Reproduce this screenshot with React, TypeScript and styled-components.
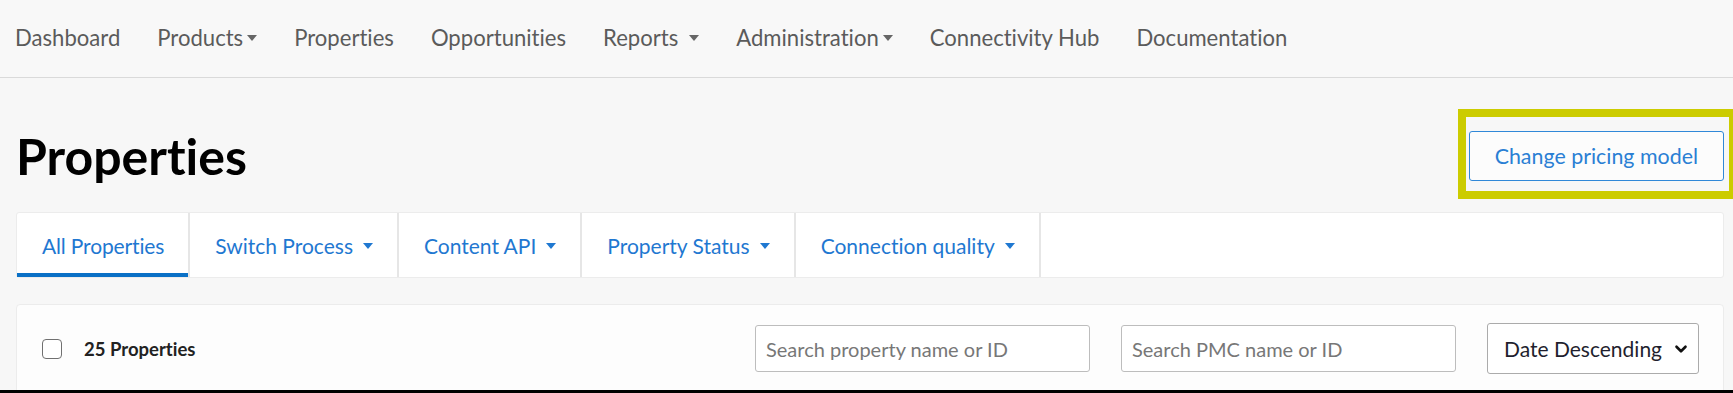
import styled, { createGlobalStyle } from "styled-components"
import { ChevronDown } from "lucide-react"

const GlobalStyle = createGlobalStyle`
  body {
    margin: 0;
    background: #f7f7f7;
    font-family: Lato, "Open Sans", sans-serif;
    font-variant-ligatures: none;
  }
  * {
    box-sizing: border-box;
  }
`

const Page = styled.div`
  height: 393px;
  overflow: hidden;
  border-bottom: 3px solid #000;
  background: #f7f7f7;
`

const TopNav = styled.nav`
  height: 78px;
  display: flex;
  align-items: center;
  gap: 37px;
  padding: 0 15px 3px;
  border-bottom: 1px solid #dadada;
  background: #f8f8f8;
`

const NavItem = styled.span`
  display: flex;
  align-items: center;
  font-size: 22.1px;
  color: #5b5b5b;
  white-space: nowrap;
`

const Caret = styled.span<{ $gap?: number; $color?: string }>`
  display: inline-block;
  margin-left: ${(p) => p.$gap ?? 4}px;
  border-top: 6px solid ${(p) => p.$color ?? "#666"};
  border-left: 5px solid transparent;
  border-right: 5px solid transparent;
  margin-top: 2px;
`

const Content = styled.div`
  padding: 0 9px 0 16px;
`

const Header = styled.div`
  display: flex;
  justify-content: space-between;
  align-items: center;
  padding: 48px 0 26px;
`

const Title = styled.h1`
  margin: 0;
  font-size: 50px;
  line-height: 60px;
  font-weight: 700;
  color: #000;
`

// annotation frame drawn over the button
const Highlight = styled.div`
  position: relative;
  &::after {
    content: "";
    position: absolute;
    top: -22px;
    bottom: -18px;
    left: -11px;
    right: -13px;
    border: 8px solid #cccc00;
    pointer-events: none;
  }
`

const OutlineButton = styled.button`
  height: 50px;
  padding: 0 25px;
  font-family: inherit;
  font-variant-ligatures: none;
  font-size: 21.4px;
  color: #2a7fd4;
  background: #fcfcfc;
  border: 1px solid #3088d8;
  border-radius: 3px;
`

const TabCard = styled.div`
  display: flex;
  height: 66px;
  background: #fff;
  border: 1px solid #ececec;
  border-radius: 3px;
`

const Tab = styled.div<{ $active?: boolean }>`
  display: flex;
  align-items: center;
  padding: 0 24px 0 25px;
  font-size: 21px;
  letter-spacing: ${(p) => (p.$active ? "-0.15px" : "0")};
  color: #1f78d1;
  border-right: 2px solid #e6e6e6;
  box-shadow: ${(p) => (p.$active ? "inset 0 -4px 0 #0a70c6" : "none")};
  white-space: nowrap;
`

const FilterCard = styled.div`
  margin-top: 26px;
  height: 120px;
  display: flex;
  align-items: flex-start;
  padding: 18px 24px 0 25px;
  background: #fdfdfd;
  border: 1px solid #ececec;
  border-radius: 4px;
`

const CountLabel = styled.label`
  display: flex;
  align-items: center;
  gap: 22px;
  height: 51px;
  font-size: 18.5px;
  font-weight: 700;
  color: #222;
  margin-right: auto;
`

const CheckBox = styled.span`
  width: 20px;
  height: 20px;
  border: 1.5px solid #707070;
  border-radius: 4px;
  background: #fff;
`

const Controls = styled.div`
  display: flex;
  align-items: center;
  gap: 31px;
  height: 51px;
`

const SearchInput = styled.input`
  width: 335px;
  height: 47px;
  padding: 0 10px;
  font-family: inherit;
  font-variant-ligatures: none;
  font-size: 20px;
  color: #333;
  background: #fff;
  border: 1px solid #bdbdbd;
  border-radius: 3px;
  &::placeholder {
    color: #777;
  }
`

const SelectBox = styled.div`
  width: 212px;
  height: 51px;
  display: flex;
  align-items: center;
  justify-content: space-between;
  padding: 0 8px 0 16px;
  font-size: 21px;
  color: #1f1f2e;
  background: #fff;
  border: 1px solid #ababab;
  border-radius: 3px;
`

const navItems = [
  { label: "Dashboard" },
  { label: "Products", caret: 4 },
  { label: "Properties" },
  { label: "Opportunities" },
  { label: "Reports", caret: 11 },
  { label: "Administration", caret: 4 },
  { label: "Connectivity Hub" },
  { label: "Documentation" },
]

const tabs = [
  { label: "All Properties", active: true },
  { label: "Switch Process", caret: true },
  { label: "Content API", caret: true },
  { label: "Property Status", caret: true },
  { label: "Connection quality", caret: true },
]

export default function App() {
  return (
    <Page>
      <GlobalStyle />
      <TopNav>
        {navItems.map((item) => (
          <NavItem key={item.label}>
            {item.label}
            {item.caret !== undefined && <Caret $gap={item.caret} />}
          </NavItem>
        ))}
      </TopNav>
      <Content>
        <Header>
          <Title>Properties</Title>
          <Highlight>
            <OutlineButton>Change pricing model</OutlineButton>
          </Highlight>
        </Header>
        <TabCard>
          {tabs.map((t) => (
            <Tab key={t.label} $active={t.active}>
              {t.label}
              {t.caret && <Caret $gap={10} $color="#1f78d1" />}
            </Tab>
          ))}
        </TabCard>
        <FilterCard>
          <CountLabel>
            <CheckBox />
            25 Properties
          </CountLabel>
          <Controls>
            <SearchInput placeholder="Search property name or ID" />
            <SearchInput placeholder="Search PMC name or ID" />
            <SelectBox>
              Date Descending
              <ChevronDown size={18} strokeWidth={3.5} color="#111" />
            </SelectBox>
          </Controls>
        </FilterCard>
      </Content>
    </Page>
  )
}
